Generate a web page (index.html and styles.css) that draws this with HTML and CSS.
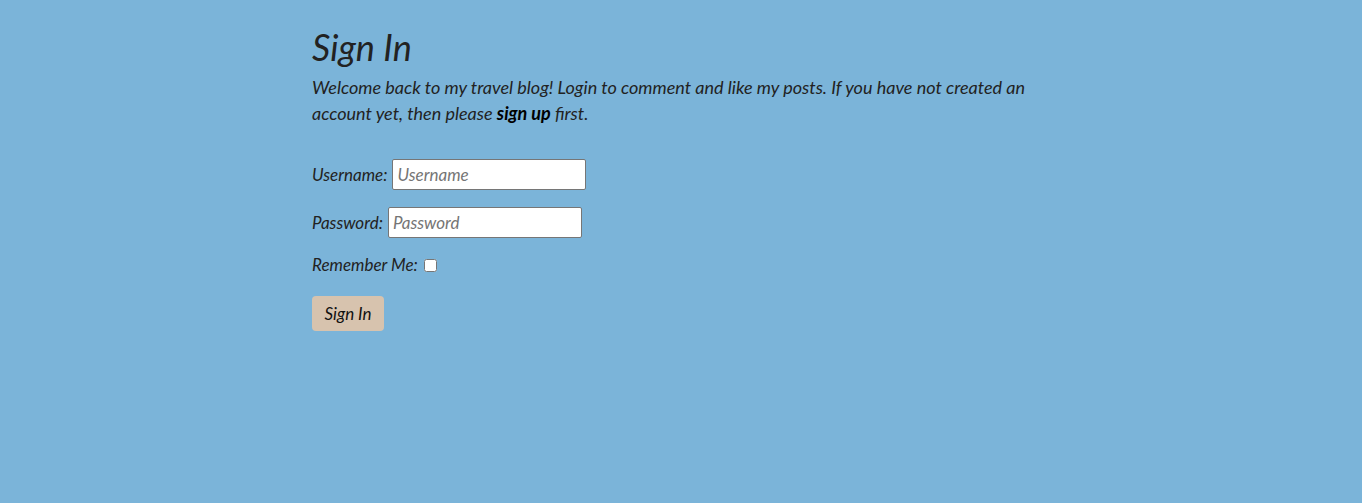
FILE: index.html
```html
<!DOCTYPE html>
<html lang="en">
<head>
<meta charset="utf-8">
<title>Sign In</title>
<link rel="stylesheet" href="styles.css">
</head>
<body>
<main class="page">
  <h1 class="title">Sign In</h1>
  <p class="intro">Welcome back to my travel blog! Login to comment and like my posts. If you have not created an account yet, then please <a class="link" href="#">sign up</a> first.</p>
  <form class="form">
    <div class="row">
      <label class="label" for="u">Username:</label>
      <input class="field" id="u" type="text" placeholder="Username">
    </div>
    <div class="row">
      <label class="label" for="p">Password:</label>
      <input class="field" id="p" type="password" placeholder="Password">
    </div>
    <div class="row row-check">
      <label class="label" for="r">Remember Me:</label>
      <input class="check" id="r" type="checkbox">
    </div>
    <button class="btn" type="button">Sign In</button>
  </form>
</main>
</body>
</html>
```
FILE: styles.css
```css
html, body {
  margin: 0;
  padding: 0;
  background: #7bb4d9;
}
body {
  font-family: "Lato", "Open Sans", sans-serif;
  font-style: italic;
  color: #222;
  font-size: 18px;
}
.page {
  width: 738px;
  margin: 0 auto;
  padding-top: 22px;
}
.title {
  font-size: 36px;
  font-weight: 400;
  line-height: 50px;
  margin: 0 0 2px;
}
.intro {
  margin: 0;
  line-height: 26px;
}
.link {
  color: #000;
  font-weight: 700;
  text-decoration: none;
}
.form {
  display: flex;
  flex-direction: column;
  align-items: flex-start;
  margin-top: 33px;
}
.row {
  display: flex;
  align-items: center;
  gap: 5px;
  margin-bottom: 17px;
}
.label {
  font-size: 17px;
  line-height: 31px;
}
.field {
  width: 194px;
  height: 31px;
  box-sizing: border-box;
  border: 1px solid #767676;
  border-radius: 2px;
  padding: 0 4px;
  font: inherit;
  font-size: 17px;
  background: #fff;
  color: #222;
}
.field::placeholder {
  color: #757575;
}
.row-check {
  gap: 6px;
  margin-bottom: 16px;
  margin-top: -6px;
}
.check {
  width: 13px;
  height: 13px;
  margin: 2px 0 0;
}
.btn {
  width: 72px;
  height: 35px;
  border: none;
  border-radius: 4px;
  background: #d7c3ae;
  font: inherit;
  font-size: 17px;
  color: #111;
  padding: 0;
}
```
